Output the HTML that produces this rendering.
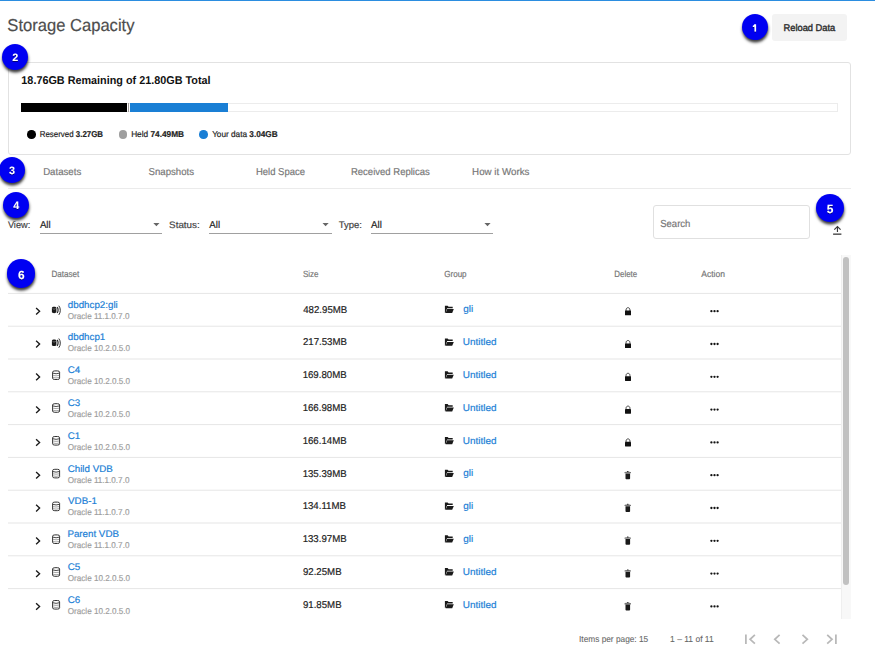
<!DOCTYPE html>
<html><head><meta charset="utf-8"><style>
html,body{margin:0;padding:0;background:#fff;width:875px;height:656px;overflow:hidden}
body{position:relative;font-family:"Liberation Sans",sans-serif}
.abs{position:absolute}
svg{display:block}
svg text{font-family:"Liberation Sans",sans-serif;text-rendering:geometricPrecision;white-space:pre}
.badge{position:absolute;border-radius:50%;background:#0000f2;box-shadow:0.3px 2.5px 3px rgba(0,0,0,0.78)}
.badge svg{position:absolute;left:0;top:0}
</style></head><body>
<div class="abs" style="left:0;top:0;width:875px;height:1px;background:#2b8de0"></div>
<div class="abs" style="left:772px;top:14px;width:75px;height:27px;background:#f3f3f3;border-radius:3px"></div>
<div class="abs" style="left:8px;top:62px;width:841px;height:91px;border:1px solid #e2e2e2;border-radius:3px"></div>
<div class="abs" style="left:21px;top:103px;width:815px;height:7px;border:1px solid #ececec"></div>
<div class="abs" style="left:21px;top:103px;width:106px;height:9px;background:#000"></div>
<div class="abs" style="left:128px;top:103px;width:1px;height:9px;background:#a09c9a"></div>
<div class="abs" style="left:130px;top:103px;width:98px;height:9px;background:#1a7fd5"></div>
<div class="abs" style="left:27.2px;top:130.2px;width:8.5px;height:8.5px;border-radius:50%;background:#000"></div>
<div class="abs" style="left:118.8px;top:130.0px;width:8.5px;height:8.5px;border-radius:50%;background:#9e9e9e"></div>
<div class="abs" style="left:199.1px;top:130.0px;width:8.5px;height:8.5px;border-radius:50%;background:#1a7fd5"></div>
<div class="abs" style="left:8px;top:188px;width:843px;height:1px;background:#ebebeb"></div>
<div class="abs" style="left:40px;top:233px;width:122px;height:1px;background:#a0a0a0"></div>
<div class="abs" style="left:209px;top:233px;width:123px;height:1px;background:#a0a0a0"></div>
<div class="abs" style="left:370.7px;top:233px;width:122.5px;height:1px;background:#a0a0a0"></div>
<div class="abs" style="left:653px;top:205px;width:155px;height:32px;border:1px solid #e0e0e0;border-radius:3px"></div>
<div class="abs" style="left:841px;top:255px;width:10px;height:364px;background:#f8f8f8;border-left:1px solid #efefef;box-sizing:border-box"></div>
<div class="abs" style="left:843px;top:257px;width:6px;height:328px;background:#c1c1c1;border-radius:3px"></div>
<svg class="abs" style="left:0;top:0" width="875" height="656" viewBox="0 0 875 656">
<defs><clipPath id="sc"><rect x="0" y="255" width="841" height="364"/></clipPath>
<filter id="ts" x="-50%" y="-50%" width="200%" height="200%"><feDropShadow dx="0" dy="0.8" stdDeviation="0.5" flood-color="#000" flood-opacity="0.5"/></filter></defs>
<path d="M153.3 223 H159.5 L156.4 226.2 Z M322.5 223 H328.7 L325.6 226.2 Z M484.4 223 H490.6 L487.5 226.2 Z" fill="#666"/>
<path d="M837.45 232 V226.8 M834.3 229.7 L837.45 226.5 L840.6 229.7" fill="none" stroke="#3a3a3a" stroke-width="1.15"/>
<rect x="833.1" y="233.5" width="8.3" height="1.3" fill="#3a3a3a"/>
<g fill="none" stroke="#b8b8b8" stroke-width="1.75">
<path d="M745.9 634.5 V644"/><path d="M754.9 634.9 L750.1 639.3 L754.9 643.7"/>
<path d="M779.6 634.9 L774.8 639.3 L779.6 643.7"/>
<path d="M802.5 634.9 L807.3 639.3 L802.5 643.7"/>
<path d="M827.2 634.9 L832 639.3 L827.2 643.7"/><path d="M835.9 634.5 V644"/>
</g>
<text x="7.37" y="30.90" font-size="17.3" font-weight="400" fill="#4d4d4d" textLength="127.11" lengthAdjust="spacingAndGlyphs" stroke="#4d4d4d" stroke-width="0.18">Storage Capacity</text><text x="783.56" y="31.20" font-size="9.7" font-weight="400" fill="#2e2e2e" textLength="51.74" lengthAdjust="spacingAndGlyphs" stroke="#2e2e2e" stroke-width="0.4">Reload Data</text><text x="21.35" y="84.00" font-size="11.3" font-weight="700" fill="#111" textLength="189.18" lengthAdjust="spacingAndGlyphs" stroke="#111" stroke-width="0.0">18.76GB Remaining of 21.80GB Total</text><text x="39.77" y="137.00" font-size="8.5" font-weight="400" fill="#222" textLength="63.28" lengthAdjust="spacingAndGlyphs" stroke="#222" stroke-width="0.18">Reserved <tspan font-weight="700">3.27GB</tspan></text><text x="131.14" y="137.00" font-size="8.5" font-weight="400" fill="#222" textLength="52.91" lengthAdjust="spacingAndGlyphs" stroke="#222" stroke-width="0.18">Held <tspan font-weight="700">74.49MB</tspan></text><text x="212.15" y="137.00" font-size="8.5" font-weight="400" fill="#222" textLength="65.55" lengthAdjust="spacingAndGlyphs" stroke="#222" stroke-width="0.18">Your data <tspan font-weight="700">3.04GB</tspan></text><text x="43.13" y="174.80" font-size="10.0" font-weight="400" fill="#777" textLength="38.12" lengthAdjust="spacingAndGlyphs" stroke="#777" stroke-width="0.18">Datasets</text><text x="148.52" y="174.80" font-size="10.0" font-weight="400" fill="#777" textLength="45.52" lengthAdjust="spacingAndGlyphs" stroke="#777" stroke-width="0.18">Snapshots</text><text x="255.94" y="174.80" font-size="10.0" font-weight="400" fill="#777" textLength="49.04" lengthAdjust="spacingAndGlyphs" stroke="#777" stroke-width="0.18">Held Space</text><text x="350.94" y="174.80" font-size="10.0" font-weight="400" fill="#777" textLength="78.87" lengthAdjust="spacingAndGlyphs" stroke="#777" stroke-width="0.18">Received Replicas</text><text x="472.12" y="174.80" font-size="10.0" font-weight="400" fill="#777" textLength="57.28" lengthAdjust="spacingAndGlyphs" stroke="#777" stroke-width="0.18">How it Works</text><text x="7.91" y="227.80" font-size="9.4" font-weight="400" fill="#444" textLength="22.29" lengthAdjust="spacingAndGlyphs" stroke="#444" stroke-width="0.18">View:</text><text x="169.11" y="227.80" font-size="9.4" font-weight="400" fill="#444" textLength="30.60" lengthAdjust="spacingAndGlyphs" stroke="#444" stroke-width="0.18">Status:</text><text x="338.71" y="227.80" font-size="9.4" font-weight="400" fill="#444" textLength="23.20" lengthAdjust="spacingAndGlyphs" stroke="#444" stroke-width="0.18">Type:</text><text x="39.90" y="227.80" font-size="9.9" font-weight="400" fill="#222" textLength="10.80" lengthAdjust="spacingAndGlyphs" stroke="#222" stroke-width="0.18">All</text><text x="209.30" y="227.80" font-size="9.9" font-weight="400" fill="#222" textLength="10.80" lengthAdjust="spacingAndGlyphs" stroke="#222" stroke-width="0.18">All</text><text x="371.00" y="227.80" font-size="9.9" font-weight="400" fill="#222" textLength="10.80" lengthAdjust="spacingAndGlyphs" stroke="#222" stroke-width="0.18">All</text><text x="660.22" y="226.90" font-size="10.2" font-weight="400" fill="#757575" textLength="30.13" lengthAdjust="spacingAndGlyphs" stroke="#757575" stroke-width="0.18">Search</text><text x="51.55" y="276.50" font-size="9.0" font-weight="400" fill="#757575" textLength="27.80" lengthAdjust="spacingAndGlyphs" stroke="#757575" stroke-width="0.18">Dataset</text><text x="302.90" y="276.50" font-size="9.0" font-weight="400" fill="#757575" textLength="15.69" lengthAdjust="spacingAndGlyphs" stroke="#757575" stroke-width="0.18">Size</text><text x="444.20" y="276.50" font-size="9.0" font-weight="400" fill="#757575" textLength="22.42" lengthAdjust="spacingAndGlyphs" stroke="#757575" stroke-width="0.18">Group</text><text x="614.37" y="276.50" font-size="9.0" font-weight="400" fill="#757575" textLength="22.85" lengthAdjust="spacingAndGlyphs" stroke="#757575" stroke-width="0.18">Delete</text><text x="701.30" y="276.50" font-size="9.0" font-weight="400" fill="#757575" textLength="23.69" lengthAdjust="spacingAndGlyphs" stroke="#757575" stroke-width="0.18">Action</text><text x="579.05" y="641.80" font-size="8.8" font-weight="400" fill="#666" textLength="69.17" lengthAdjust="spacingAndGlyphs" stroke="#666" stroke-width="0.08">Items per page: 15</text><text x="670.12" y="641.80" font-size="8.8" font-weight="400" fill="#666" textLength="43.54" lengthAdjust="spacingAndGlyphs" stroke="#666" stroke-width="0.08">1 – 11 of 11</text>
<g clip-path="url(#sc)"><rect x="8" y="292.90" width="833" height="1" fill="#e6e6e6"/><rect x="8" y="325.70" width="833" height="1" fill="#e6e6e6"/><path d="M36.1 308.00 L39.6 311.30 L36.1 314.60" fill="none" stroke="#1a1a1a" stroke-width="1.35"/><g transform="translate(51.9,306.70)"><path d="M0 1.3 C0 -0.4 4.5 -0.4 4.5 1.3 L4.5 5.4 C4.5 6.9 0 6.9 0 5.4 Z" fill="#1a1a1a"/><path d="M0.7 1.9 C1.6 2.6 2.9 2.6 3.8 1.9" fill="none" stroke="#9a9a9a" stroke-width="0.7"/><path d="M5.3 0.4 C6.5 1.9 6.5 4.8 5.3 6.3" fill="none" stroke="#222" stroke-width="1.15"/><path d="M6.9 -1.0 C8.9 1.3 8.9 5.9 6.9 8.2" fill="none" stroke="#333" stroke-width="1.0"/></g><g transform="translate(444.9,305.70)"><path d="M0 0 H2.7 L3.7 1.1 H7.8 V2.6 H2.2 L0.6 7.2 H0 Z" fill="#1a1a1a"/><path d="M2.3 3.4 H8.9 L7.3 7.3 H0.7 Z" fill="#1a1a1a"/></g><g transform="translate(625,307.00)"><path d="M1.05 4 V2.9 C1.05 -0.05 4.95 -0.05 4.95 2.9 V4" fill="none" stroke="#444" stroke-width="1.0"/><rect x="0" y="3.6" width="6" height="4.7" rx="0.4" fill="#111"/></g><circle cx="711.4" cy="311.20" r="1.15" fill="#111"/><circle cx="714.5" cy="311.20" r="1.15" fill="#111"/><circle cx="717.6" cy="311.20" r="1.15" fill="#111"/><rect x="8" y="358.50" width="833" height="1" fill="#e6e6e6"/><path d="M36.1 340.80 L39.6 344.10 L36.1 347.40" fill="none" stroke="#1a1a1a" stroke-width="1.35"/><g transform="translate(51.9,339.50)"><path d="M0 1.3 C0 -0.4 4.5 -0.4 4.5 1.3 L4.5 5.4 C4.5 6.9 0 6.9 0 5.4 Z" fill="#1a1a1a"/><path d="M0.7 1.9 C1.6 2.6 2.9 2.6 3.8 1.9" fill="none" stroke="#9a9a9a" stroke-width="0.7"/><path d="M5.3 0.4 C6.5 1.9 6.5 4.8 5.3 6.3" fill="none" stroke="#222" stroke-width="1.15"/><path d="M6.9 -1.0 C8.9 1.3 8.9 5.9 6.9 8.2" fill="none" stroke="#333" stroke-width="1.0"/></g><g transform="translate(444.9,338.50)"><path d="M0 0 H2.7 L3.7 1.1 H7.8 V2.6 H2.2 L0.6 7.2 H0 Z" fill="#1a1a1a"/><path d="M2.3 3.4 H8.9 L7.3 7.3 H0.7 Z" fill="#1a1a1a"/></g><g transform="translate(625,339.80)"><path d="M1.05 4 V2.9 C1.05 -0.05 4.95 -0.05 4.95 2.9 V4" fill="none" stroke="#444" stroke-width="1.0"/><rect x="0" y="3.6" width="6" height="4.7" rx="0.4" fill="#111"/></g><circle cx="711.4" cy="344.00" r="1.15" fill="#111"/><circle cx="714.5" cy="344.00" r="1.15" fill="#111"/><circle cx="717.6" cy="344.00" r="1.15" fill="#111"/><rect x="8" y="391.30" width="833" height="1" fill="#e6e6e6"/><path d="M36.1 373.60 L39.6 376.90 L36.1 380.20" fill="none" stroke="#1a1a1a" stroke-width="1.35"/><g transform="translate(52.1,370.40)" fill="none"><rect x="0.5" y="0.5" width="7" height="8.6" rx="2.2" ry="1.3" stroke="#333" stroke-width="1"/><path d="M0.6 2.7 Q4 4.0 7.4 2.7" stroke="#333" stroke-width="0.9"/><path d="M1 5.0 Q4 5.8 7 5.0 M1 7.1 Q4 7.9 7 7.1" stroke="#808080" stroke-width="0.7"/></g><g transform="translate(444.9,371.30)"><path d="M0 0 H2.7 L3.7 1.1 H7.8 V2.6 H2.2 L0.6 7.2 H0 Z" fill="#1a1a1a"/><path d="M2.3 3.4 H8.9 L7.3 7.3 H0.7 Z" fill="#1a1a1a"/></g><g transform="translate(625,372.60)"><path d="M1.05 4 V2.9 C1.05 -0.05 4.95 -0.05 4.95 2.9 V4" fill="none" stroke="#444" stroke-width="1.0"/><rect x="0" y="3.6" width="6" height="4.7" rx="0.4" fill="#111"/></g><circle cx="711.4" cy="376.80" r="1.15" fill="#111"/><circle cx="714.5" cy="376.80" r="1.15" fill="#111"/><circle cx="717.6" cy="376.80" r="1.15" fill="#111"/><rect x="8" y="424.10" width="833" height="1" fill="#e6e6e6"/><path d="M36.1 406.40 L39.6 409.70 L36.1 413.00" fill="none" stroke="#1a1a1a" stroke-width="1.35"/><g transform="translate(52.1,403.20)" fill="none"><rect x="0.5" y="0.5" width="7" height="8.6" rx="2.2" ry="1.3" stroke="#333" stroke-width="1"/><path d="M0.6 2.7 Q4 4.0 7.4 2.7" stroke="#333" stroke-width="0.9"/><path d="M1 5.0 Q4 5.8 7 5.0 M1 7.1 Q4 7.9 7 7.1" stroke="#808080" stroke-width="0.7"/></g><g transform="translate(444.9,404.10)"><path d="M0 0 H2.7 L3.7 1.1 H7.8 V2.6 H2.2 L0.6 7.2 H0 Z" fill="#1a1a1a"/><path d="M2.3 3.4 H8.9 L7.3 7.3 H0.7 Z" fill="#1a1a1a"/></g><g transform="translate(625,405.40)"><path d="M1.05 4 V2.9 C1.05 -0.05 4.95 -0.05 4.95 2.9 V4" fill="none" stroke="#444" stroke-width="1.0"/><rect x="0" y="3.6" width="6" height="4.7" rx="0.4" fill="#111"/></g><circle cx="711.4" cy="409.60" r="1.15" fill="#111"/><circle cx="714.5" cy="409.60" r="1.15" fill="#111"/><circle cx="717.6" cy="409.60" r="1.15" fill="#111"/><rect x="8" y="456.90" width="833" height="1" fill="#e6e6e6"/><path d="M36.1 439.20 L39.6 442.50 L36.1 445.80" fill="none" stroke="#1a1a1a" stroke-width="1.35"/><g transform="translate(52.1,436.00)" fill="none"><rect x="0.5" y="0.5" width="7" height="8.6" rx="2.2" ry="1.3" stroke="#333" stroke-width="1"/><path d="M0.6 2.7 Q4 4.0 7.4 2.7" stroke="#333" stroke-width="0.9"/><path d="M1 5.0 Q4 5.8 7 5.0 M1 7.1 Q4 7.9 7 7.1" stroke="#808080" stroke-width="0.7"/></g><g transform="translate(444.9,436.90)"><path d="M0 0 H2.7 L3.7 1.1 H7.8 V2.6 H2.2 L0.6 7.2 H0 Z" fill="#1a1a1a"/><path d="M2.3 3.4 H8.9 L7.3 7.3 H0.7 Z" fill="#1a1a1a"/></g><g transform="translate(625,438.20)"><path d="M1.05 4 V2.9 C1.05 -0.05 4.95 -0.05 4.95 2.9 V4" fill="none" stroke="#444" stroke-width="1.0"/><rect x="0" y="3.6" width="6" height="4.7" rx="0.4" fill="#111"/></g><circle cx="711.4" cy="442.40" r="1.15" fill="#111"/><circle cx="714.5" cy="442.40" r="1.15" fill="#111"/><circle cx="717.6" cy="442.40" r="1.15" fill="#111"/><rect x="8" y="489.70" width="833" height="1" fill="#e6e6e6"/><path d="M36.1 472.00 L39.6 475.30 L36.1 478.60" fill="none" stroke="#1a1a1a" stroke-width="1.35"/><g transform="translate(52.1,468.80)" fill="none"><rect x="0.5" y="0.5" width="7" height="8.6" rx="2.2" ry="1.3" stroke="#333" stroke-width="1"/><path d="M0.6 2.7 Q4 4.0 7.4 2.7" stroke="#333" stroke-width="0.9"/><path d="M1 5.0 Q4 5.8 7 5.0 M1 7.1 Q4 7.9 7 7.1" stroke="#808080" stroke-width="0.7"/></g><g transform="translate(444.9,469.70)"><path d="M0 0 H2.7 L3.7 1.1 H7.8 V2.6 H2.2 L0.6 7.2 H0 Z" fill="#1a1a1a"/><path d="M2.3 3.4 H8.9 L7.3 7.3 H0.7 Z" fill="#1a1a1a"/></g><g transform="translate(624.4,471.00)"><path d="M0.1 1.1 C1.5 0.5 5.2 0.5 6.6 1.1 L6.6 2.2 L0.1 2.2 Z" fill="#777"/><rect x="2.6" y="0" width="1.6" height="0.9" rx="0.4" fill="#111"/><path d="M1.1 2.4 H5.7 V7.2 C5.7 7.9 5.2 8.2 4.6 8.2 H2.2 C1.6 8.2 1.1 7.9 1.1 7.2 Z" fill="#1a1a1a"/></g><circle cx="711.4" cy="475.20" r="1.15" fill="#111"/><circle cx="714.5" cy="475.20" r="1.15" fill="#111"/><circle cx="717.6" cy="475.20" r="1.15" fill="#111"/><rect x="8" y="522.50" width="833" height="1" fill="#e6e6e6"/><path d="M36.1 504.80 L39.6 508.10 L36.1 511.40" fill="none" stroke="#1a1a1a" stroke-width="1.35"/><g transform="translate(52.1,501.60)" fill="none"><rect x="0.5" y="0.5" width="7" height="8.6" rx="2.2" ry="1.3" stroke="#333" stroke-width="1"/><path d="M0.6 2.7 Q4 4.0 7.4 2.7" stroke="#333" stroke-width="0.9"/><path d="M1 5.0 Q4 5.8 7 5.0 M1 7.1 Q4 7.9 7 7.1" stroke="#808080" stroke-width="0.7"/></g><g transform="translate(444.9,502.50)"><path d="M0 0 H2.7 L3.7 1.1 H7.8 V2.6 H2.2 L0.6 7.2 H0 Z" fill="#1a1a1a"/><path d="M2.3 3.4 H8.9 L7.3 7.3 H0.7 Z" fill="#1a1a1a"/></g><g transform="translate(624.4,503.80)"><path d="M0.1 1.1 C1.5 0.5 5.2 0.5 6.6 1.1 L6.6 2.2 L0.1 2.2 Z" fill="#777"/><rect x="2.6" y="0" width="1.6" height="0.9" rx="0.4" fill="#111"/><path d="M1.1 2.4 H5.7 V7.2 C5.7 7.9 5.2 8.2 4.6 8.2 H2.2 C1.6 8.2 1.1 7.9 1.1 7.2 Z" fill="#1a1a1a"/></g><circle cx="711.4" cy="508.00" r="1.15" fill="#111"/><circle cx="714.5" cy="508.00" r="1.15" fill="#111"/><circle cx="717.6" cy="508.00" r="1.15" fill="#111"/><rect x="8" y="555.30" width="833" height="1" fill="#e6e6e6"/><path d="M36.1 537.60 L39.6 540.90 L36.1 544.20" fill="none" stroke="#1a1a1a" stroke-width="1.35"/><g transform="translate(52.1,534.40)" fill="none"><rect x="0.5" y="0.5" width="7" height="8.6" rx="2.2" ry="1.3" stroke="#333" stroke-width="1"/><path d="M0.6 2.7 Q4 4.0 7.4 2.7" stroke="#333" stroke-width="0.9"/><path d="M1 5.0 Q4 5.8 7 5.0 M1 7.1 Q4 7.9 7 7.1" stroke="#808080" stroke-width="0.7"/></g><g transform="translate(444.9,535.30)"><path d="M0 0 H2.7 L3.7 1.1 H7.8 V2.6 H2.2 L0.6 7.2 H0 Z" fill="#1a1a1a"/><path d="M2.3 3.4 H8.9 L7.3 7.3 H0.7 Z" fill="#1a1a1a"/></g><g transform="translate(624.4,536.60)"><path d="M0.1 1.1 C1.5 0.5 5.2 0.5 6.6 1.1 L6.6 2.2 L0.1 2.2 Z" fill="#777"/><rect x="2.6" y="0" width="1.6" height="0.9" rx="0.4" fill="#111"/><path d="M1.1 2.4 H5.7 V7.2 C5.7 7.9 5.2 8.2 4.6 8.2 H2.2 C1.6 8.2 1.1 7.9 1.1 7.2 Z" fill="#1a1a1a"/></g><circle cx="711.4" cy="540.80" r="1.15" fill="#111"/><circle cx="714.5" cy="540.80" r="1.15" fill="#111"/><circle cx="717.6" cy="540.80" r="1.15" fill="#111"/><rect x="8" y="588.10" width="833" height="1" fill="#e6e6e6"/><path d="M36.1 570.40 L39.6 573.70 L36.1 577.00" fill="none" stroke="#1a1a1a" stroke-width="1.35"/><g transform="translate(52.1,567.20)" fill="none"><rect x="0.5" y="0.5" width="7" height="8.6" rx="2.2" ry="1.3" stroke="#333" stroke-width="1"/><path d="M0.6 2.7 Q4 4.0 7.4 2.7" stroke="#333" stroke-width="0.9"/><path d="M1 5.0 Q4 5.8 7 5.0 M1 7.1 Q4 7.9 7 7.1" stroke="#808080" stroke-width="0.7"/></g><g transform="translate(444.9,568.10)"><path d="M0 0 H2.7 L3.7 1.1 H7.8 V2.6 H2.2 L0.6 7.2 H0 Z" fill="#1a1a1a"/><path d="M2.3 3.4 H8.9 L7.3 7.3 H0.7 Z" fill="#1a1a1a"/></g><g transform="translate(624.4,569.40)"><path d="M0.1 1.1 C1.5 0.5 5.2 0.5 6.6 1.1 L6.6 2.2 L0.1 2.2 Z" fill="#777"/><rect x="2.6" y="0" width="1.6" height="0.9" rx="0.4" fill="#111"/><path d="M1.1 2.4 H5.7 V7.2 C5.7 7.9 5.2 8.2 4.6 8.2 H2.2 C1.6 8.2 1.1 7.9 1.1 7.2 Z" fill="#1a1a1a"/></g><circle cx="711.4" cy="573.60" r="1.15" fill="#111"/><circle cx="714.5" cy="573.60" r="1.15" fill="#111"/><circle cx="717.6" cy="573.60" r="1.15" fill="#111"/><rect x="8" y="620.90" width="833" height="1" fill="#e6e6e6"/><path d="M36.1 603.20 L39.6 606.50 L36.1 609.80" fill="none" stroke="#1a1a1a" stroke-width="1.35"/><g transform="translate(52.1,600.00)" fill="none"><rect x="0.5" y="0.5" width="7" height="8.6" rx="2.2" ry="1.3" stroke="#333" stroke-width="1"/><path d="M0.6 2.7 Q4 4.0 7.4 2.7" stroke="#333" stroke-width="0.9"/><path d="M1 5.0 Q4 5.8 7 5.0 M1 7.1 Q4 7.9 7 7.1" stroke="#808080" stroke-width="0.7"/></g><g transform="translate(444.9,600.90)"><path d="M0 0 H2.7 L3.7 1.1 H7.8 V2.6 H2.2 L0.6 7.2 H0 Z" fill="#1a1a1a"/><path d="M2.3 3.4 H8.9 L7.3 7.3 H0.7 Z" fill="#1a1a1a"/></g><g transform="translate(624.4,602.20)"><path d="M0.1 1.1 C1.5 0.5 5.2 0.5 6.6 1.1 L6.6 2.2 L0.1 2.2 Z" fill="#777"/><rect x="2.6" y="0" width="1.6" height="0.9" rx="0.4" fill="#111"/><path d="M1.1 2.4 H5.7 V7.2 C5.7 7.9 5.2 8.2 4.6 8.2 H2.2 C1.6 8.2 1.1 7.9 1.1 7.2 Z" fill="#1a1a1a"/></g><circle cx="711.4" cy="606.40" r="1.15" fill="#111"/><circle cx="714.5" cy="606.40" r="1.15" fill="#111"/><circle cx="717.6" cy="606.40" r="1.15" fill="#111"/><text x="67.81" y="307.50" font-size="9.6" font-weight="400" fill="#1b80d6" textLength="49.93" lengthAdjust="spacingAndGlyphs" stroke="#1b80d6" stroke-width="0.18">dbdhcp2:gli</text><text x="67.79" y="318.50" font-size="8.5" font-weight="400" fill="#9e9e9e" textLength="61.61" lengthAdjust="spacingAndGlyphs" stroke="#9e9e9e" stroke-width="0.18">Oracle 11.1.0.7.0</text><text x="303.21" y="312.50" font-size="9.9" font-weight="400" fill="#222" textLength="44.06" lengthAdjust="spacingAndGlyphs" stroke="#222" stroke-width="0.18">482.95MB</text><text x="463.20" y="312.40" font-size="9.7" font-weight="400" fill="#1b80d6" textLength="9.94" lengthAdjust="spacingAndGlyphs" stroke="#1b80d6" stroke-width="0.18">gli</text><text x="67.81" y="340.30" font-size="9.6" font-weight="400" fill="#1b80d6" textLength="37.45" lengthAdjust="spacingAndGlyphs" stroke="#1b80d6" stroke-width="0.18">dbdhcp1</text><text x="67.79" y="351.30" font-size="8.5" font-weight="400" fill="#9e9e9e" textLength="62.21" lengthAdjust="spacingAndGlyphs" stroke="#9e9e9e" stroke-width="0.18">Oracle 10.2.0.5.0</text><text x="302.92" y="345.30" font-size="9.9" font-weight="400" fill="#222" textLength="44.06" lengthAdjust="spacingAndGlyphs" stroke="#222" stroke-width="0.18">217.53MB</text><text x="462.80" y="345.20" font-size="9.7" font-weight="400" fill="#1b80d6" textLength="33.70" lengthAdjust="spacingAndGlyphs" stroke="#1b80d6" stroke-width="0.18">Untitled</text><text x="67.71" y="373.10" font-size="9.6" font-weight="400" fill="#1b80d6" textLength="12.48" lengthAdjust="spacingAndGlyphs" stroke="#1b80d6" stroke-width="0.18">C4</text><text x="67.79" y="384.10" font-size="8.5" font-weight="400" fill="#9e9e9e" textLength="62.21" lengthAdjust="spacingAndGlyphs" stroke="#9e9e9e" stroke-width="0.18">Oracle 10.2.0.5.0</text><text x="302.63" y="378.10" font-size="9.9" font-weight="400" fill="#222" textLength="44.06" lengthAdjust="spacingAndGlyphs" stroke="#222" stroke-width="0.18">169.80MB</text><text x="462.80" y="378.00" font-size="9.7" font-weight="400" fill="#1b80d6" textLength="33.70" lengthAdjust="spacingAndGlyphs" stroke="#1b80d6" stroke-width="0.18">Untitled</text><text x="67.71" y="405.90" font-size="9.6" font-weight="400" fill="#1b80d6" textLength="12.48" lengthAdjust="spacingAndGlyphs" stroke="#1b80d6" stroke-width="0.18">C3</text><text x="67.79" y="416.90" font-size="8.5" font-weight="400" fill="#9e9e9e" textLength="62.21" lengthAdjust="spacingAndGlyphs" stroke="#9e9e9e" stroke-width="0.18">Oracle 10.2.0.5.0</text><text x="302.63" y="410.90" font-size="9.9" font-weight="400" fill="#222" textLength="44.06" lengthAdjust="spacingAndGlyphs" stroke="#222" stroke-width="0.18">166.98MB</text><text x="462.80" y="410.80" font-size="9.7" font-weight="400" fill="#1b80d6" textLength="33.70" lengthAdjust="spacingAndGlyphs" stroke="#1b80d6" stroke-width="0.18">Untitled</text><text x="67.71" y="438.70" font-size="9.6" font-weight="400" fill="#1b80d6" textLength="12.48" lengthAdjust="spacingAndGlyphs" stroke="#1b80d6" stroke-width="0.18">C1</text><text x="67.79" y="449.70" font-size="8.5" font-weight="400" fill="#9e9e9e" textLength="62.21" lengthAdjust="spacingAndGlyphs" stroke="#9e9e9e" stroke-width="0.18">Oracle 10.2.0.5.0</text><text x="302.63" y="443.70" font-size="9.9" font-weight="400" fill="#222" textLength="44.06" lengthAdjust="spacingAndGlyphs" stroke="#222" stroke-width="0.18">166.14MB</text><text x="462.80" y="443.60" font-size="9.7" font-weight="400" fill="#1b80d6" textLength="33.70" lengthAdjust="spacingAndGlyphs" stroke="#1b80d6" stroke-width="0.18">Untitled</text><text x="67.71" y="471.50" font-size="9.6" font-weight="400" fill="#1b80d6" textLength="45.02" lengthAdjust="spacingAndGlyphs" stroke="#1b80d6" stroke-width="0.18">Child VDB</text><text x="67.79" y="482.50" font-size="8.5" font-weight="400" fill="#9e9e9e" textLength="61.61" lengthAdjust="spacingAndGlyphs" stroke="#9e9e9e" stroke-width="0.18">Oracle 11.1.0.7.0</text><text x="302.63" y="476.50" font-size="9.9" font-weight="400" fill="#222" textLength="44.06" lengthAdjust="spacingAndGlyphs" stroke="#222" stroke-width="0.18">135.39MB</text><text x="463.20" y="476.40" font-size="9.7" font-weight="400" fill="#1b80d6" textLength="9.94" lengthAdjust="spacingAndGlyphs" stroke="#1b80d6" stroke-width="0.18">gli</text><text x="68.10" y="504.30" font-size="9.6" font-weight="400" fill="#1b80d6" textLength="28.75" lengthAdjust="spacingAndGlyphs" stroke="#1b80d6" stroke-width="0.18">VDB-1</text><text x="67.79" y="515.30" font-size="8.5" font-weight="400" fill="#9e9e9e" textLength="61.61" lengthAdjust="spacingAndGlyphs" stroke="#9e9e9e" stroke-width="0.18">Oracle 11.1.0.7.0</text><text x="302.63" y="509.30" font-size="9.9" font-weight="400" fill="#222" textLength="43.35" lengthAdjust="spacingAndGlyphs" stroke="#222" stroke-width="0.18">134.11MB</text><text x="463.20" y="509.20" font-size="9.7" font-weight="400" fill="#1b80d6" textLength="9.94" lengthAdjust="spacingAndGlyphs" stroke="#1b80d6" stroke-width="0.18">gli</text><text x="67.42" y="537.10" font-size="9.6" font-weight="400" fill="#1b80d6" textLength="51.54" lengthAdjust="spacingAndGlyphs" stroke="#1b80d6" stroke-width="0.18">Parent VDB</text><text x="67.79" y="548.10" font-size="8.5" font-weight="400" fill="#9e9e9e" textLength="61.61" lengthAdjust="spacingAndGlyphs" stroke="#9e9e9e" stroke-width="0.18">Oracle 11.1.0.7.0</text><text x="302.63" y="542.10" font-size="9.9" font-weight="400" fill="#222" textLength="44.06" lengthAdjust="spacingAndGlyphs" stroke="#222" stroke-width="0.18">133.97MB</text><text x="463.20" y="542.00" font-size="9.7" font-weight="400" fill="#1b80d6" textLength="9.94" lengthAdjust="spacingAndGlyphs" stroke="#1b80d6" stroke-width="0.18">gli</text><text x="67.71" y="569.90" font-size="9.6" font-weight="400" fill="#1b80d6" textLength="12.48" lengthAdjust="spacingAndGlyphs" stroke="#1b80d6" stroke-width="0.18">C5</text><text x="67.79" y="580.90" font-size="8.5" font-weight="400" fill="#9e9e9e" textLength="62.21" lengthAdjust="spacingAndGlyphs" stroke="#9e9e9e" stroke-width="0.18">Oracle 10.2.0.5.0</text><text x="302.92" y="574.90" font-size="9.9" font-weight="400" fill="#222" textLength="38.69" lengthAdjust="spacingAndGlyphs" stroke="#222" stroke-width="0.18">92.25MB</text><text x="462.80" y="574.80" font-size="9.7" font-weight="400" fill="#1b80d6" textLength="33.70" lengthAdjust="spacingAndGlyphs" stroke="#1b80d6" stroke-width="0.18">Untitled</text><text x="67.71" y="602.70" font-size="9.6" font-weight="400" fill="#1b80d6" textLength="12.48" lengthAdjust="spacingAndGlyphs" stroke="#1b80d6" stroke-width="0.18">C6</text><text x="67.79" y="613.70" font-size="8.5" font-weight="400" fill="#9e9e9e" textLength="62.21" lengthAdjust="spacingAndGlyphs" stroke="#9e9e9e" stroke-width="0.18">Oracle 10.2.0.5.0</text><text x="302.92" y="607.70" font-size="9.9" font-weight="400" fill="#222" textLength="38.69" lengthAdjust="spacingAndGlyphs" stroke="#222" stroke-width="0.18">91.85MB</text><text x="462.80" y="607.60" font-size="9.7" font-weight="400" fill="#1b80d6" textLength="33.70" lengthAdjust="spacingAndGlyphs" stroke="#1b80d6" stroke-width="0.18">Untitled</text></g>
</svg>
<div class="badge" style="left:741.80px;top:13.50px;width:26px;height:26px"><svg width="26" height="26" style="overflow:visible"><defs><filter id="ts1" x="-50%" y="-50%" width="200%" height="200%"><feDropShadow dx="0" dy="0.9" stdDeviation="0.6" flood-color="#000" flood-opacity="0.55"/></filter></defs><path filter="url(#ts1)" fill="#fff" d="M12.3 10.2 H14.1 V17.6 H12.5 V12.4 C12.0 12.8 11.4 13.0 10.8 13.1 V11.8 C11.5 11.6 12.0 11.0 12.3 10.2 Z"/></svg></div>
<div class="badge" style="left:1.90px;top:43.50px;width:26.4px;height:26.4px"><svg width="26.4" height="26.4" style="overflow:visible"><defs><filter id="ts2" x="-50%" y="-50%" width="200%" height="200%"><feDropShadow dx="0" dy="0.9" stdDeviation="0.6" flood-color="#000" flood-opacity="0.55"/></filter></defs><text x="13.2" y="17.30" text-anchor="middle" font-size="10.8" font-weight="700" fill="#fff" filter="url(#ts2)">2</text></svg></div>
<div class="badge" style="left:-0.90px;top:156.60px;width:26.2px;height:26.2px"><svg width="26.2" height="26.2" style="overflow:visible"><defs><filter id="ts3" x="-50%" y="-50%" width="200%" height="200%"><feDropShadow dx="0" dy="0.9" stdDeviation="0.6" flood-color="#000" flood-opacity="0.55"/></filter></defs><text x="13.1" y="17.30" text-anchor="middle" font-size="10.8" font-weight="700" fill="#fff" filter="url(#ts3)">3</text></svg></div>
<div class="badge" style="left:2.80px;top:191.60px;width:26.4px;height:26.4px"><svg width="26.4" height="26.4" style="overflow:visible"><defs><filter id="ts4" x="-50%" y="-50%" width="200%" height="200%"><feDropShadow dx="0" dy="0.9" stdDeviation="0.6" flood-color="#000" flood-opacity="0.55"/></filter></defs><text x="13.2" y="17.40" text-anchor="middle" font-size="10.8" font-weight="700" fill="#fff" filter="url(#ts4)">4</text></svg></div>
<div class="badge" style="left:815.85px;top:193.55px;width:28.3px;height:28.3px"><svg width="28.3" height="28.3" style="overflow:visible"><defs><filter id="ts5" x="-50%" y="-50%" width="200%" height="200%"><feDropShadow dx="0" dy="0.9" stdDeviation="0.6" flood-color="#000" flood-opacity="0.55"/></filter></defs><text x="14.15" y="19.45" text-anchor="middle" font-size="12" font-weight="700" fill="#fff" filter="url(#ts5)">5</text></svg></div>
<div class="badge" style="left:6.70px;top:259.10px;width:28.6px;height:28.6px"><svg width="28.6" height="28.6" style="overflow:visible"><defs><filter id="ts6" x="-50%" y="-50%" width="200%" height="200%"><feDropShadow dx="0" dy="0.9" stdDeviation="0.6" flood-color="#000" flood-opacity="0.55"/></filter></defs><text x="14.3" y="19.90" text-anchor="middle" font-size="12" font-weight="700" fill="#fff" filter="url(#ts6)">6</text></svg></div>
</body></html>
